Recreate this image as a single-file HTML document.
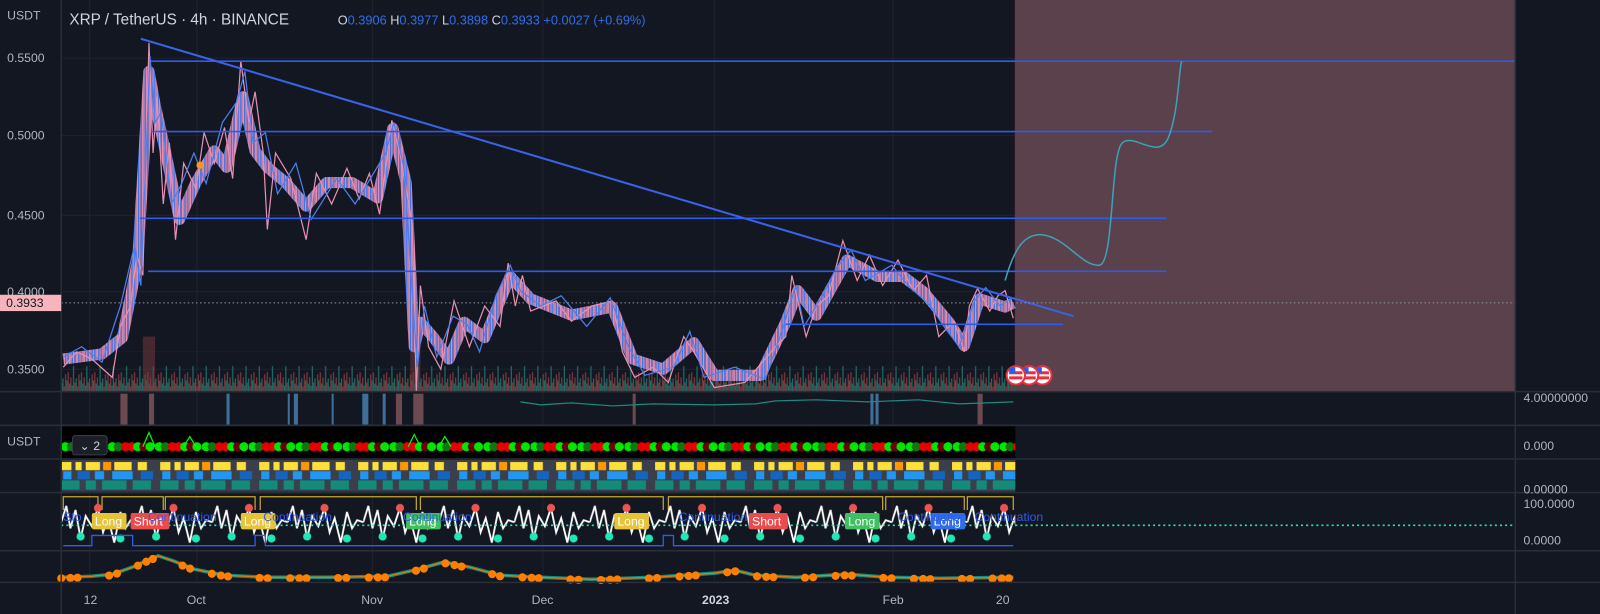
<!DOCTYPE html>
<html><head><meta charset="utf-8"><style>
html,body{margin:0;padding:0;background:#131722;overflow:hidden}
svg{display:block}
text{font-family:"Liberation Sans",sans-serif}
</style></head><body>
<svg width="1600" height="614" viewBox="0 0 1568 602" preserveAspectRatio="none" xmlns="http://www.w3.org/2000/svg">
<defs>
<pattern id="cp" patternUnits="userSpaceOnUse" x="0" y="0" width="6.5" height="400">
<rect width="6.5" height="400" fill="#131722"/>
<rect x="0" y="0" width="1.2" height="400" fill="#e890b4"/>
<rect x="1.3" y="0" width="1.2" height="400" fill="#4c7ff0"/>
<rect x="2.6" y="0" width="1.2" height="400" fill="#e890b4"/>
<rect x="3.9" y="0" width="1.2" height="400" fill="#e890b4"/>
<rect x="5.2" y="0" width="1.2" height="400" fill="#4c7ff0"/>
</pattern>
<pattern id="vp" patternUnits="userSpaceOnUse" x="0" y="345" width="13" height="39">
<rect x="0" y="28" width="1.2" height="11" fill="#1e6b66"/>
<rect x="1.3" y="20" width="1.2" height="19" fill="#7a3a3e"/>
<rect x="2.6" y="31" width="1.2" height="8" fill="#1e6b66"/>
<rect x="3.9" y="25" width="1.2" height="14" fill="#7a3a3e"/>
<rect x="5.2" y="33" width="1.2" height="6" fill="#1e6b66"/>
<rect x="6.5" y="14" width="1.2" height="25" fill="#1e6b66"/>
<rect x="7.8" y="30" width="1.2" height="9" fill="#7a3a3e"/>
<rect x="9.1" y="26" width="1.2" height="13" fill="#1e6b66"/>
<rect x="10.4" y="34" width="1.2" height="5" fill="#7a3a3e"/>
<rect x="11.7" y="22" width="1.2" height="17" fill="#7a3a3e"/>
</pattern>
<pattern id="dp" patternUnits="userSpaceOnUse" x="60" y="430" width="46" height="16">
<circle cx="4" cy="8" r="4.5" fill="#00e600"/><circle cx="10" cy="8" r="4.5" fill="#0a7a0a"/>
<circle cx="17" cy="8" r="4.5" fill="#e80000"/><circle cx="23" cy="8" r="4.5" fill="#e80000"/>
<circle cx="29" cy="8" r="4.5" fill="#00e600"/><circle cx="35" cy="8" r="4.5" fill="#6b0000"/>
<circle cx="41" cy="8" r="4.5" fill="#00e600"/>
</pattern>
<pattern id="bp" patternUnits="userSpaceOnUse" x="60" y="451" width="97" height="31">
<rect width="97" height="31" fill="#3a3f4b"/>
<rect x="0" y="2" width="10" height="8" fill="#ffe03a"/><rect x="14" y="2" width="6" height="8" fill="#ffe03a"/>
<rect x="24" y="2" width="14" height="8" fill="#ffe03a"/><rect x="41" y="2" width="8" height="8" fill="#ff9800"/>
<rect x="52" y="2" width="17" height="8" fill="#ffe03a"/><rect x="75" y="2" width="9" height="8" fill="#ffe03a"/>
<rect x="2" y="11" width="8" height="8" fill="#2196f3"/><rect x="16" y="11" width="12" height="8" fill="#1565c0"/>
<rect x="33" y="11" width="9" height="8" fill="#2196f3"/><rect x="50" y="11" width="20" height="8" fill="#2196f3"/>
<rect x="78" y="11" width="12" height="8" fill="#1565c0"/>
<rect x="0" y="20" width="18" height="9" fill="#138a7a"/><rect x="24" y="20" width="10" height="9" fill="#138a7a"/>
<rect x="40" y="20" width="24" height="9" fill="#138a7a"/><rect x="70" y="20" width="18" height="9" fill="#138a7a"/>
</pattern>
<pattern id="wp" patternUnits="userSpaceOnUse" x="60" y="488" width="74" height="50">
<path d="M0 24 L5 8 L9 30 L14 12 L19 40 L24 18 L30 28 L36 10 L41 34 L46 20 L52 44 L58 14 L63 30 L68 22 L74 24" fill="none" stroke="#fff" stroke-width="1.8"/>
<circle cx="19" cy="38" r="4" fill="#1de9b6"/><circle cx="36" cy="10" r="4" fill="#ef5350"/><circle cx="58" cy="40" r="4" fill="#1de9b6"/>
</pattern>
</defs>
<rect width="1568" height="602" fill="#131722"/>
<g stroke="#1f2330" stroke-width="1">
<line x1="88" y1="0" x2="88" y2="571"/><line x1="193" y1="0" x2="193" y2="571"/><line x1="365" y1="0" x2="365" y2="571"/>
<line x1="532" y1="0" x2="532" y2="571"/><line x1="700" y1="0" x2="700" y2="571"/><line x1="875" y1="0" x2="875" y2="571"/>
<line x1="60" y1="57" x2="1485" y2="57"/><line x1="60" y1="133" x2="1485" y2="133"/><line x1="60" y1="211" x2="1485" y2="211"/>
<line x1="60" y1="286" x2="1485" y2="286"/><line x1="60" y1="362" x2="1485" y2="362"/>
</g>
<rect x="995" y="0" width="490" height="384" fill="#5a414c"/>
<line x1="995" y1="0" x2="995" y2="384" stroke="#8a2a3a"/>
<rect x="60" y="345" width="935" height="39" fill="url(#vp)"/>
<rect x="140" y="330" width="12" height="54" fill="#7a3a3e" opacity=".5"/>
<rect x="402" y="335" width="10" height="49" fill="#7a3a3e" opacity=".5"/>
<!-- candles -->
<polyline fill="none" stroke="url(#cp)" stroke-width="11" stroke-linejoin="round" points="62,352 100,347 120,331 135,255 146,70 152,103 162,148 176,215 192,179 210,148 222,164 238,95 250,148 262,164 280,179 300,202 320,179 345,179 370,194 385,126 398,179 406,340 412,316 425,331 440,352 455,316 475,331 500,271 520,293 560,309 600,301 620,352 650,362 680,336 700,368 745,368 770,316 782,285 800,309 830,255 860,271 885,271 905,286 930,316 945,339 960,293 985,301 993,297"/>
<polyline fill="none" stroke="#e890b4" stroke-width="1.2" points="62,360 75,345 90,352 110,370 118,320 128,300 134,250 140,270 146,42 150,150 154,95 160,200 166,140 172,235 180,160 192,185 200,130 210,160 220,125 228,175 236,60 244,120 250,90 258,150 262,225 270,150 285,175 300,235 310,170 325,200 340,165 352,195 362,170 372,210 384,118 392,150 404,220 408,384 412,280 420,340 432,362 445,295 460,340 475,300 490,320 498,258 505,300 512,270 520,305 545,295 560,315 580,300 600,295 610,345 622,370 640,360 655,375 670,330 680,345 700,380 730,375 760,340 770,330 776,270 790,330 800,300 812,290 826,236 840,275 852,250 865,280 880,255 895,285 908,270 920,330 935,315 945,345 950,300 958,283 970,305 978,290 985,285 993,312"/>
<polyline fill="none" stroke="#4c7ff0" stroke-width="1.2" points="62,350 80,340 100,355 118,300 132,240 138,280 147,55 152,120 158,110 168,200 178,180 190,150 202,180 218,120 232,100 240,70 248,140 260,130 272,190 290,160 305,215 330,175 348,200 360,180 378,150 386,120 396,165 405,300 409,360 416,300 428,350 444,310 458,318 470,345 486,290 500,260 510,285 530,300 550,290 575,320 598,292 616,340 632,368 660,360 676,325 690,370 720,360 750,372 766,325 780,280 788,320 806,290 820,262 834,245 848,275 874,260 890,280 912,300 925,320 940,340 955,295 966,282 980,300 992,292"/>
<g stroke="#2f5bea" stroke-width="1.6">
<line x1="148" y1="60" x2="1485" y2="60"/><line x1="148" y1="129" x2="1188" y2="129"/>
<line x1="137" y1="214" x2="1143" y2="214"/><line x1="145" y1="266" x2="1143" y2="266"/>
<line x1="770" y1="318" x2="1042" y2="318"/>
<line x1="138" y1="38" x2="1052" y2="310" stroke="#3a62e8" stroke-width="2"/>
</g>
<line x1="60" y1="297" x2="1485" y2="297" stroke="#9598a1" stroke-dasharray="1.5 2.5"/>
<path d="M985 275 C995 240,1005 230,1020 230 C1045 232,1060 262,1078 260 C1092 255,1088 150,1100 140 C1112 130,1135 158,1145 135 C1155 110,1155 70,1158 60" fill="none" stroke="#3fa0b8" stroke-width="1.5"/>
<circle cx="196" cy="162" r="3.5" fill="#f39c12"/>
<g>
<circle cx="1021.5" cy="368" r="9" fill="#fff" stroke="#e8303f" stroke-width="2"/><rect x="1015" y="364" width="13" height="3" fill="#e8303f"/><rect x="1015" y="369" width="13" height="3" fill="#e8303f"/><rect x="1015" y="360" width="6" height="6" fill="#2f5bea"/>
<circle cx="1008.5" cy="368" r="9" fill="#fff" stroke="#e8303f" stroke-width="2"/><rect x="1002" y="364" width="13" height="3" fill="#e8303f"/><rect x="1002" y="369" width="13" height="3" fill="#e8303f"/><rect x="1002" y="360" width="6" height="6" fill="#2f5bea"/>
<circle cx="995.5" cy="368" r="9" fill="#fff" stroke="#e8303f" stroke-width="2"/><rect x="989" y="364" width="13" height="3" fill="#e8303f"/><rect x="989" y="369" width="13" height="3" fill="#e8303f"/><rect x="989" y="360" width="6" height="6" fill="#2f5bea"/>
</g>
<!-- pane2 -->
<g>
<rect x="118" y="386" width="7" height="31" fill="#6b4a50"/><rect x="146" y="386" width="5" height="31" fill="#6b4a50"/>
<rect x="222" y="386" width="3" height="31" fill="#3e6e9a"/><rect x="282" y="386" width="2" height="31" fill="#3e6e9a"/>
<rect x="288" y="386" width="4" height="31" fill="#3e6e9a"/><rect x="325" y="386" width="2" height="31" fill="#3e6e9a"/>
<rect x="355" y="386" width="6" height="31" fill="#3e6e9a"/><rect x="375" y="386" width="3" height="31" fill="#3e6e9a"/>
<rect x="388" y="386" width="6" height="31" fill="#6b4a50"/><rect x="405" y="386" width="10" height="31" fill="#6b4a50"/>
<rect x="620" y="386" width="3" height="31" fill="#6b4a50"/><rect x="853" y="386" width="3" height="31" fill="#3e6e9a"/>
<rect x="858" y="386" width="3" height="31" fill="#3e6e9a"/><rect x="958" y="386" width="5" height="31" fill="#6b4a50"/>
<path d="M510 394 L530 397 L560 395 L600 398 L640 396 L700 397 L740 396 L760 393 L800 392 L850 394 L900 392 L940 396 L993 394" fill="none" stroke="#1f8a7e" stroke-width="1.2"/>
</g>
<rect x="60" y="418" width="935" height="32" fill="#000"/>
<rect x="60" y="430" width="935" height="16" fill="url(#dp)"/>
<path d="M140 438 L146 424 L152 438 M180 438 L186 428 L192 438 M400 438 L406 426 L412 438 M430 438 L436 428 L442 438" fill="none" stroke="#00ff00" stroke-width="1.2"/>
<rect x="71" y="427" width="34" height="19" rx="3" fill="#1c1f27" stroke="#3a3e48"/>
<text x="78" y="441" font-size="12" fill="#d1d4dc">⌄ 2</text>
<rect x="60" y="451" width="935" height="31" fill="url(#bp)"/>
<!-- pane5 -->
<g fill="none" stroke="#c9a82a" stroke-width="1.2">
<path d="M62 500 V487 H96 V500 M100 500 V487 H160 V500 M162 500 V487 H250 V500 M255 500 V487 H408 V500 M412 500 V487 H650 V500 M655 500 V487 H865 V500 M868 500 V487 H945 V500 M948 500 V487 H993 V500"/>
</g>
<rect x="60" y="488" width="935" height="50" fill="url(#wp)"/>
<path d="M62 535 H90 V525 H130 V535 H250 V525 H260 V535 H650 V525 H660 V535 H993" fill="none" stroke="#2f5bea" stroke-width="1.3"/>
<line x1="60" y1="515" x2="1485" y2="515" stroke="#1de9b6" stroke-width="1.6" stroke-dasharray="2 3"/>
<g font-size="12">
<rect x="90" y="503" width="34" height="16" rx="2" fill="#e6c43a"/><text x="93" y="515" fill="#fff">Long</text>
<rect x="128" y="503" width="38" height="16" rx="2" fill="#e94c4c"/><text x="131" y="515" fill="#fff">Short</text>
<rect x="236" y="503" width="34" height="16" rx="2" fill="#e6c43a"/><text x="239" y="515" fill="#fff">Long</text>
<rect x="398" y="503" width="34" height="16" rx="2" fill="#3fbf5f"/><text x="401" y="515" fill="#fff">Long</text>
<rect x="602" y="503" width="34" height="16" rx="2" fill="#e6c43a"/><text x="605" y="515" fill="#fff">Long</text>
<rect x="734" y="503" width="38" height="16" rx="2" fill="#e94c4c"/><text x="737" y="515" fill="#fff">Short</text>
<rect x="828" y="503" width="34" height="16" rx="2" fill="#3fbf5f"/><text x="831" y="515" fill="#fff">Long</text>
<rect x="912" y="503" width="34" height="16" rx="2" fill="#2f6ee8"/><text x="915" y="515" fill="#fff">Long</text>
<g fill="#2f5bea"><text x="62" y="511">Sto</text><text x="145" y="511">Continuation</text><text x="258" y="511">Continuation</text><text x="395" y="511">Continuation</text><text x="665" y="511">Continuation</text><text x="880" y="511">Continuation</text><text x="955" y="511">Continuation</text></g>
</g>
<!-- pane6 -->
<path d="M60 566 L90 565 L110 563 L130 556 L145 549 L155 545 L170 550 L190 558 L220 564 L260 566 L320 566 L380 565 L410 558 L435 551 L460 556 L490 564 L530 566 L580 568 L640 566 L700 562 L720 559 L740 564 L780 566 L830 563 L870 566 L920 567 L993 566" fill="none" stroke="#138a7a" stroke-width="3.5"/>
<path d="M60 566 L90 565 L110 563 L130 556 L145 549 L155 545 L170 550 L190 558 L220 564 L260 566 L320 566 L380 565 L410 558 L435 551 L460 556 L490 564 L530 566 L580 568 L640 566 L700 562 L720 559 L740 564 L780 566 L830 563 L870 566 L920 567 L993 566" fill="none" stroke="#e07a10" stroke-width="1.3"/>
<path d="M60 567 L90 566 L110 564 L130 557 L145 550 L155 546 L170 551 L190 559 L220 565 L260 567 L320 567 L380 566 L410 559 L435 552 L460 557 L490 565 L530 567 L580 569 L640 567 L700 563 L720 560 L740 565 L780 567 L830 564 L870 567 L920 568 L993 567" fill="none" stroke="#ff8000" stroke-width="8" stroke-linecap="round" stroke-dasharray="0 9 0 7 0 31 0 8 0 22"/>
<g stroke="#2a2e39" stroke-width="1.5">
<line x1="0" y1="384" x2="1568" y2="384"/><line x1="0" y1="417" x2="1568" y2="417"/>
<line x1="0" y1="450" x2="1568" y2="450"/><line x1="0" y1="483" x2="1568" y2="483"/>
<line x1="0" y1="540" x2="1568" y2="540"/><line x1="0" y1="571" x2="1568" y2="571"/>
<line x1="60" y1="0" x2="60" y2="602"/><line x1="1485" y1="0" x2="1485" y2="602"/>
</g>
<text x="68" y="24" font-size="15" fill="#d1d4dc">XRP / TetherUS · 4h · BINANCE</text>
<text x="331" y="24" font-size="12.5" fill="#d1d4dc">O<tspan fill="#2f6ee8">0.3906</tspan> H<tspan fill="#2f6ee8">0.3977</tspan> L<tspan fill="#2f6ee8">0.3898</tspan> C<tspan fill="#2f6ee8">0.3933</tspan> <tspan fill="#2f6ee8">+0.0027 (+0.69%)</tspan></text>
<g font-size="12" fill="#b2b5be">
<text x="7" y="19">USDT</text><text x="7" y="61">0.5500</text><text x="7" y="137">0.5000</text>
<text x="7" y="215">0.4500</text><text x="7" y="290">0.4000</text><text x="7" y="366">0.3500</text>
<text x="7" y="437">USDT</text>
<text x="1493" y="394">4.00000000</text><text x="1493" y="441">0.000</text><text x="1493" y="484">0.00000</text>
<text x="1493" y="498">100.0000</text><text x="1493" y="534">0.0000</text>
<text x="82" y="592">12</text><text x="183" y="592">Oct</text><text x="354" y="592">Nov</text>
<text x="521" y="592">Dec</text><text x="688" y="592" font-weight="bold" fill="#d1d4dc">2023</text>
<text x="865" y="592">Feb</text><text x="976" y="592">20</text>
</g>
<rect x="0" y="289" width="60" height="16" fill="#f7b4bd"/>
<text x="6" y="301" font-size="12" fill="#131722">0.3933</text>
</svg>
</body></html>
